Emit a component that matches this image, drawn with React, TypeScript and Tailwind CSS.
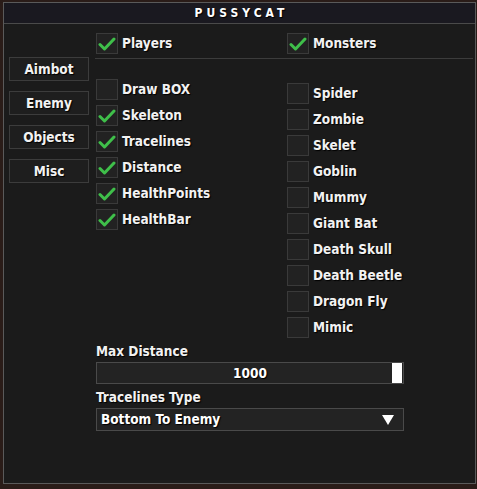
import React from "react";

const font = { fontFamily: '"DejaVu Sans Condensed", "DejaVu Sans", Verdana, sans-serif' };

const leftItems = [
  { label: "Draw BOX", on: false },
  { label: "Skeleton", on: true },
  { label: "Tracelines", on: true },
  { label: "Distance", on: true },
  { label: "HealthPoints", on: true },
  { label: "HealthBar", on: true },
];

const monsters = [
  "Spider",
  "Zombie",
  "Skelet",
  "Goblin",
  "Mummy",
  "Giant Bat",
  "Death Skull",
  "Death Beetle",
  "Dragon Fly",
  "Mimic",
];

const tabs = ["Aimbot", "Enemy", "Objects", "Misc"];

const shadow = "[text-shadow:1px_1px_1px_#000]";

function Check({ label, on }: { label: string; on: boolean }) {
  return (
    <div className="flex items-center h-[21px]">
      <div className="w-[22px] h-[21px] border border-[#3a3a3a] bg-[#222222] flex items-center justify-center">
        {on && (
          <svg width="18" height="16" viewBox="0 0 18 16">
            <path
              d="M2 8.5 L6.5 13 L16 3"
              fill="none"
              stroke="#3fbf4a"
              strokeWidth="3"
              strokeLinecap="round"
              strokeLinejoin="round"
            />
          </svg>
        )}
      </div>
      <span className={`ml-[4px] text-[13.5px] font-bold text-[#f2f2f2] ${shadow}`}>{label}</span>
    </div>
  );
}

export default function App() {
  return (
    <div className="w-[477px] h-[489px] bg-[#2a1c18] pl-[3px] pt-[2px]" style={font}>
      <div className="w-[473px] h-[482px] border border-[#5a5a5a] bg-[#1b1b1b] flex flex-col">
        <div className="h-[21px] bg-[#1a1920] border-b border-[#4a4a4a] flex items-center justify-center">
          <span className={`text-[12px] font-bold text-white tracking-[4px] pl-[4px] ${shadow}`}>
            PUSSYCAT
          </span>
        </div>
        <div className="flex flex-1">
          <div className="w-[92px] pl-[5px] pt-[33px] flex flex-col gap-[10px]">
            {tabs.map((t) => (
              <div
                key={t}
                className={`w-[80px] h-[24px] border border-[#3c3c3c] bg-[#1e1e1e] flex items-center justify-center text-[13.5px] font-bold text-[#f2f2f2] ${shadow}`}
              >
                {t}
              </div>
            ))}
          </div>
          <div className="flex-1 pt-[9px] pr-[2px]">
            <div className="flex">
              <div className="w-[191px]">
                <Check label="Players" on />
              </div>
              <Check label="Monsters" on />
            </div>
            <div className="h-px bg-[#3c3c3c] mt-[4px] -ml-px" />
            <div className="flex mt-[20px]">
              <div className="w-[191px] flex flex-col gap-[5px]">
                {leftItems.map((it) => (
                  <Check key={it.label} label={it.label} on={it.on} />
                ))}
              </div>
              <div className="pt-[4px] flex flex-col gap-[5px]">
                {monsters.map((m) => (
                  <Check key={m} label={m} on={false} />
                ))}
              </div>
            </div>
            <div className={`mt-[5px] h-[16px] leading-[16px] text-[13.5px] font-bold text-[#f2f2f2] ${shadow}`}>
              Max Distance
            </div>
            <div className="mt-[3px] w-[308px] h-[22px] border border-[#4a4a4a] bg-[#232323] flex items-center relative">
              <span className={`flex-1 text-center text-[13.5px] font-bold text-white ${shadow}`}>1000</span>
              <div className="absolute right-[1px] top-0 w-[10px] h-[20px] bg-white" />
            </div>
            <div className={`mt-[5px] h-[16px] leading-[16px] text-[13.5px] font-bold text-[#f2f2f2] ${shadow}`}>
              Tracelines Type
            </div>
            <div className="mt-[3px] w-[308px] h-[23px] border border-[#4a4a4a] bg-[#232323] flex items-center justify-between pl-[4px] pr-[9px]">
              <span className={`text-[13.5px] font-bold text-white ${shadow}`}>Bottom To Enemy</span>
              <svg width="12" height="10" viewBox="0 0 12 10">
                <path d="M0 0 H12 L6 10 Z" fill="#ffffff" />
              </svg>
            </div>
          </div>
        </div>
      </div>
    </div>
  );
}
